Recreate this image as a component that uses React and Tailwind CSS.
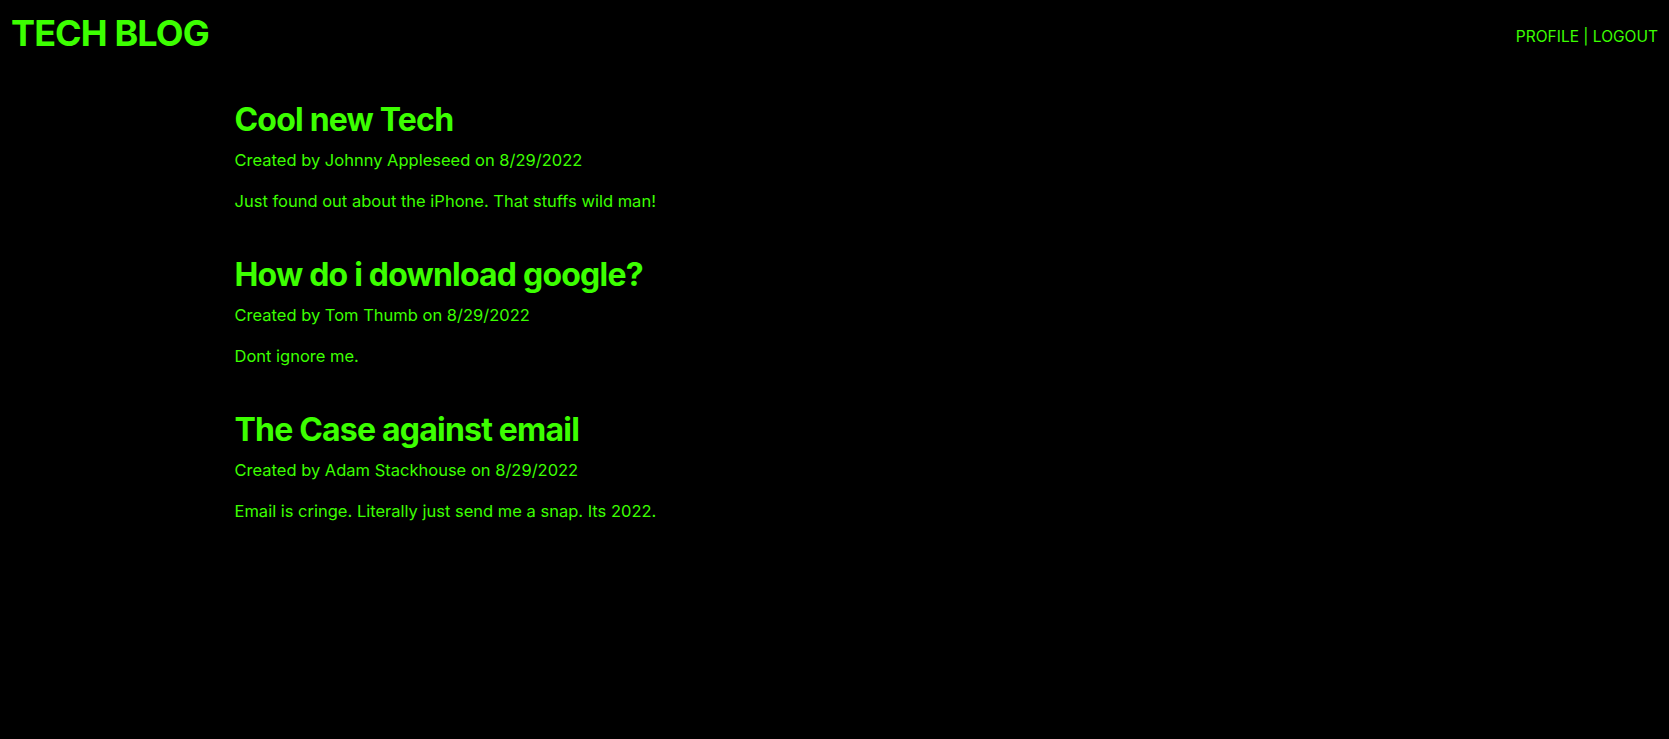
const posts = [
  {
    title: "Cool new Tech",
    author: "Johnny Appleseed",
    date: "8/29/2022",
    body: "Just found out about the iPhone. That stuffs wild man!",
  },
  {
    title: "How do i download google?",
    author: "Tom Thumb",
    date: "8/29/2022",
    body: "Dont ignore me.",
  },
  {
    title: "The Case against email",
    author: "Adam Stackhouse",
    date: "8/29/2022",
    body: "Email is cringe. Literally just send me a snap. Its 2022.",
  },
];

export default function App() {
  return (
    <div className="min-h-screen bg-black text-[#3cff00] font-['Inter',sans-serif]">
      {/* header */}
      <header className="flex justify-between items-start px-[11px] pt-[13px]">
        <h1 className="text-4xl font-bold tracking-tight">TECH BLOG</h1>
        <nav className="pt-[12px] text-[15.5px]">
          <a href="#">PROFILE</a> | <a href="#">LOGOUT</a>
        </nav>
      </header>

      {/* post list */}
      <main className="max-w-[1200px] mx-auto pt-[47px]">
        {posts.map((post, i) => (
          <article key={i} className="h-[155px]">
            <h2 className="text-[32px] leading-[40px] font-bold tracking-tight">{post.title}</h2>
            <p className="text-[16.5px] mt-[8px]">
              Created by {post.author} on {post.date}
            </p>
            <p className="text-[16.5px] mt-[16px]">{post.body}</p>
          </article>
        ))}
      </main>
    </div>
  );
}
